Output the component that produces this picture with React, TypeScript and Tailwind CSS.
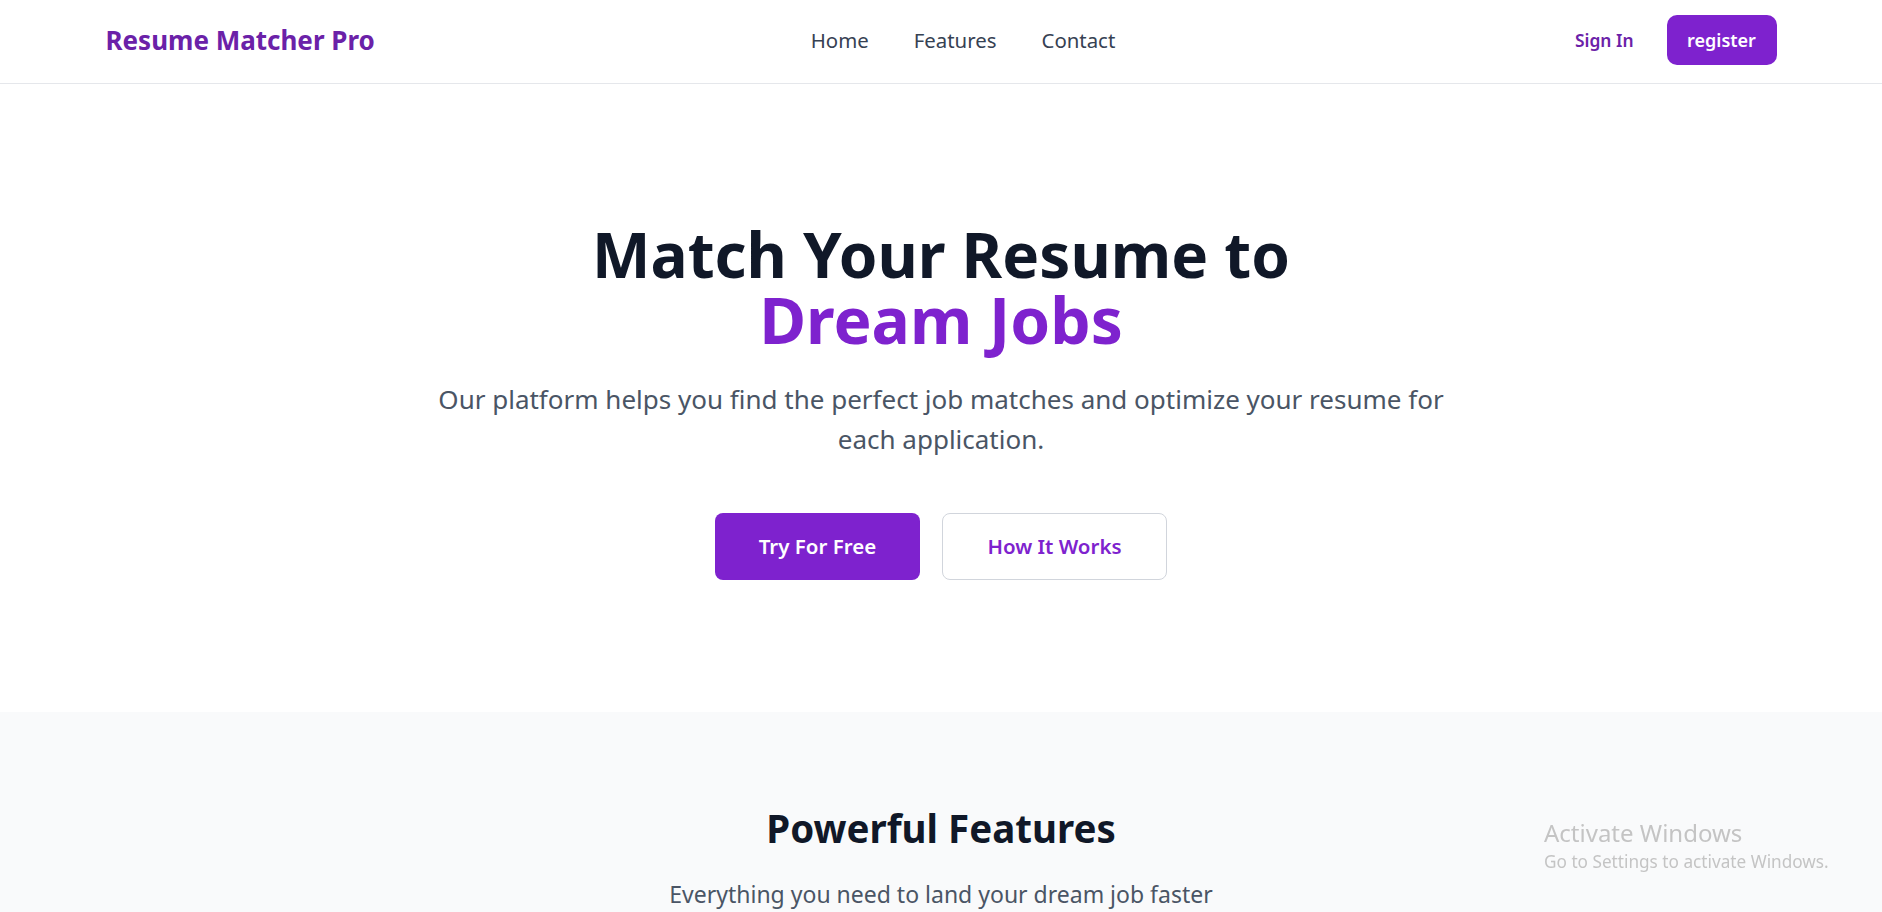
import React from "react";

const font = { fontFamily: '"Noto Sans", "Open Sans", sans-serif' };

function Navbar() {
  return (
    <header className="h-[84px] w-full border-b border-gray-200 bg-white">
      <div className="mx-auto grid h-full w-[1671px] grid-cols-[1fr_auto_1fr] items-center pb-[3px]">
        <a href="#" className="text-[26px] font-bold text-[#6b21a8]">
          Resume Matcher Pro
        </a>
        <nav className="ml-[44px] flex items-center gap-[45px] text-[20.4px] text-gray-700">
          <a href="#">Home</a>
          <a href="#">Features</a>
          <a href="#">Contact</a>
        </nav>
        <div className="flex items-center justify-end gap-[33px]">
          <a href="#" className="text-[17.4px] font-semibold text-[#6b21a8]">
            Sign In
          </a>
          <button className="h-[50px] w-[110px] rounded-[10px] bg-[#7e22ce] text-[18px] font-semibold text-white">
            register
          </button>
        </div>
      </div>
    </header>
  );
}

function Hero() {
  return (
    <section className="flex h-[628px] flex-col items-center bg-white pt-[137px] text-center">
      <h1 className="font-bold text-gray-900">
        <span className="block text-[62px] leading-[66px]">Match Your Resume to</span>
        <span className="block text-[64px] leading-[66px] text-[#7e22ce]">Dream Jobs</span>
      </h1>
      <p className="mt-[26px] w-[1040px] text-[26px] leading-[40px] text-gray-600">
        Our platform helps you find the perfect job matches and optimize your resume for each application.
      </p>
      <div className="mt-[54px] flex gap-[22px]">
        <button className="h-[67px] w-[205px] rounded-[8px] bg-[#7e22ce] text-[20.5px] font-semibold text-white">
          Try For Free
        </button>
        <button className="h-[67px] w-[225px] rounded-[8px] border border-gray-300 bg-white text-[20.5px] font-semibold text-[#7e22ce]">
          How It Works
        </button>
      </div>
    </section>
  );
}

function Features() {
  return (
    <section className="flex flex-col items-center bg-gray-50 pt-[90px] pb-[80px] text-center">
      <h2 className="text-[38.5px] font-bold leading-[52px] text-gray-900">Powerful Features</h2>
      <p className="mt-[24px] text-[23px] leading-[32px] text-gray-600">
        Everything you need to land your dream job faster
      </p>
    </section>
  );
}

export default function App() {
  return (
    <div style={font} className="min-h-screen bg-white">
      <Navbar />
      <Hero />
      <Features />
      {/* windows watermark overlay */}
      <div className="pointer-events-none fixed left-[1544px] top-[818px] text-[#c4c4c4]">
        <p className="text-[24px] leading-[30px]">Activate Windows</p>
        <p className="mt-[3px] text-[17.2px] leading-[22px]">Go to Settings to activate Windows.</p>
      </div>
    </div>
  );
}
